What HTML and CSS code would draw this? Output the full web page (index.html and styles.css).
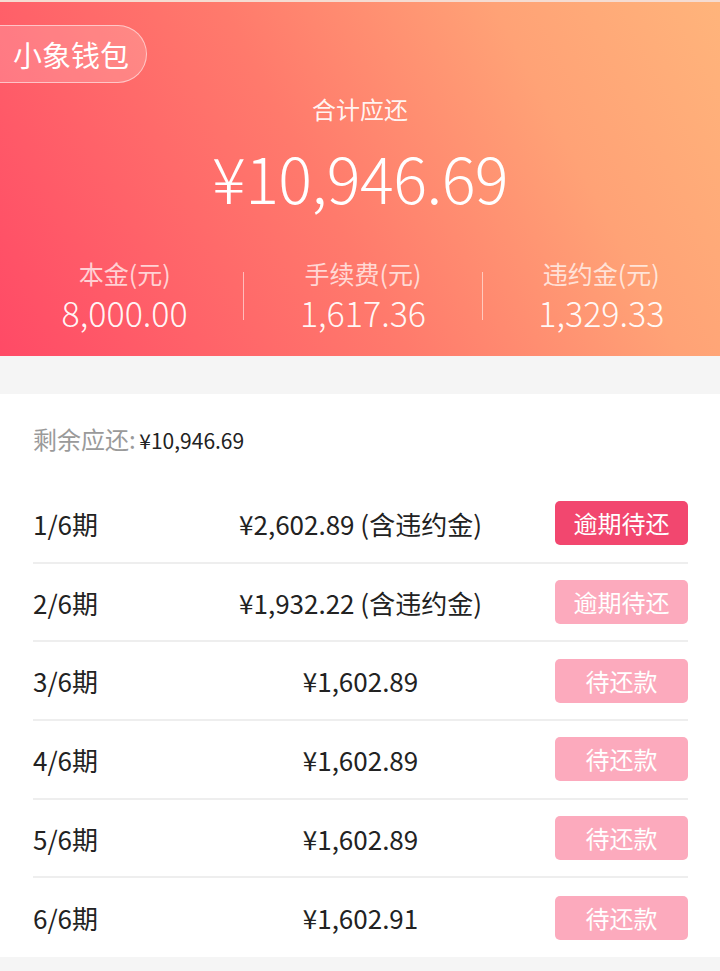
FILE: index.html
```html
<!DOCTYPE html>
<html lang="zh-CN">
<head>
<meta charset="utf-8">
<title>小象钱包</title>
<link rel="stylesheet" href="styles.css">
</head>
<body>
<div class="page">
  <header class="hero">
    <div class="brand">小象钱包</div>
    <div class="total-label">合计应还</div>
    <div class="total-amount">¥10,946.69</div>
    <div class="stats">
      <div class="stat">
        <div class="stat-label">本金(元)</div>
        <div class="stat-value">8,000.00</div>
      </div>
      <div class="stat-divider"></div>
      <div class="stat">
        <div class="stat-label">手续费(元)</div>
        <div class="stat-value">1,617.36</div>
      </div>
      <div class="stat-divider"></div>
      <div class="stat">
        <div class="stat-label">违约金(元)</div>
        <div class="stat-value">1,329.33</div>
      </div>
    </div>
  </header>
  <div class="gap"></div>
  <section class="plan">
    <div class="remain"><span class="remain-label">剩余应还:</span> <span class="remain-value">¥10,946.69</span></div>
    <ul class="rows">
      <li class="row"><span class="term">1/6期</span><span class="amount">¥2,602.89 (含违约金)</span><span class="btn-wrap"><span class="btn btn-overdue">逾期待还</span></span></li>
      <li class="row"><span class="term">2/6期</span><span class="amount">¥1,932.22 (含违约金)</span><span class="btn-wrap"><span class="btn btn-light">逾期待还</span></span></li>
      <li class="row"><span class="term">3/6期</span><span class="amount">¥1,602.89</span><span class="btn-wrap"><span class="btn btn-light">待还款</span></span></li>
      <li class="row"><span class="term">4/6期</span><span class="amount">¥1,602.89</span><span class="btn-wrap"><span class="btn btn-light">待还款</span></span></li>
      <li class="row"><span class="term">5/6期</span><span class="amount">¥1,602.89</span><span class="btn-wrap"><span class="btn btn-light">待还款</span></span></li>
      <li class="row"><span class="term">6/6期</span><span class="amount">¥1,602.91</span><span class="btn-wrap"><span class="btn btn-light">待还款</span></span></li>
    </ul>
  </section>
  <div class="footer-gap"></div>
</div>
</body>
</html>
```

FILE: styles.css
```css
* { box-sizing: border-box; }
html, body { margin: 0; padding: 0; }
body {
  background: #f5f5f5;
  font-family: "Noto Sans CJK SC", "Noto Sans", sans-serif;
  color: #222;
}
.page { width: 720px; }

.hero {
  height: 356px;
  border-top: 2px solid #f5dcd2;
  padding-top: 23px;
  background: linear-gradient(62deg, #ff4a66 0%, #ff7a6c 45%, #ffa276 75%, #ffb47b 100%);
  color: #fff;
  display: flex;
  flex-direction: column;
  align-items: center;
}
.brand {
  align-self: flex-start;
  height: 58px;
  line-height: 56px;
  padding: 0 17px 0 13px;
  font-size: 29px;
  border: 1px solid rgba(255, 255, 255, 0.55);
  border-left: none;
  border-radius: 0 29px 29px 0;
  background: rgba(255, 255, 255, 0.18);
}
.total-label {
  margin-top: 11px;
  font-size: 24px;
  line-height: 30px;
  color: rgba(255, 255, 255, 0.92);
}
.total-amount {
  margin-top: 18px;
  font-size: 63px;
  line-height: 70px;
  font-weight: 300;
  letter-spacing: -0.5px;
}
.stats {
  margin-top: 46px;
  width: 100%;
  padding-left: 6px;
  display: flex;
  align-items: center;
}
.stat {
  flex: 1;
  text-align: center;
}
.stat-label {
  font-size: 25px;
  line-height: 30px;
  color: rgba(255, 255, 255, 0.72);
}
.stat-value {
  margin-top: 5px;
  font-size: 34px;
  line-height: 40px;
  font-weight: 300;
  color: rgba(255, 255, 255, 0.95);
}
.stat-divider {
  width: 1px;
  height: 48px;
  background: rgba(255, 255, 255, 0.55);
}

.gap { height: 38px; background: #f5f5f5; }

.plan {
  background: #fff;
  padding: 30px 32px 0 33px;
}
.remain {
  line-height: 30px;
}
.remain-label { font-size: 24px; color: #9a9a9a; }
.remain-value { font-size: 21px; color: #222; }

.rows {
  list-style: none;
  margin: 28px 0 0;
  padding: 0;
}
.row {
  height: 78.7px;
  display: grid;
  grid-template-columns: 1fr auto 1fr;
  align-items: center;
  border-bottom: 2px solid #eeeeee;
  font-size: 26px;
}
.row:last-child { border-bottom: none; }
.term { color: #222; }
.amount { color: #222; text-align: center; }
.btn-wrap { display: flex; justify-content: flex-end; }
.btn {
  width: 133px;
  height: 44px;
  line-height: 44px;
  border-radius: 5px;
  text-align: center;
  color: #fff;
  font-size: 24px;
}
.btn-overdue { background: #f2476f; }
.btn-light { background: #fcaabd; }

.footer-gap { height: 14px; background: #f5f5f5; }
```
